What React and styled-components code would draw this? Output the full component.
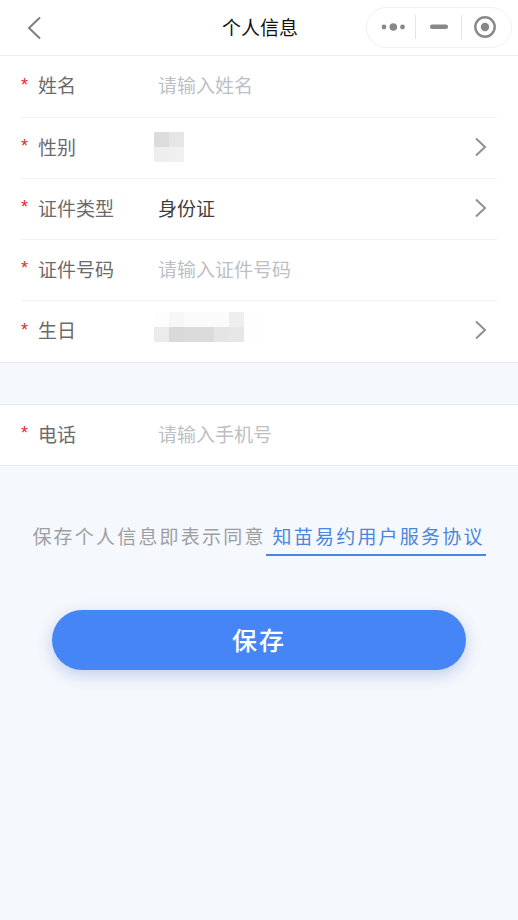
import React from "react";
import styled, { createGlobalStyle } from "styled-components";

const Global = createGlobalStyle`
  html, body { margin: 0; padding: 0; background: #f5f8fc; }
  body { font-family: "Noto Sans CJK SC", "Liberation Sans", sans-serif; }
  * { box-sizing: border-box; }
`;
const Page = styled.div`
  width: 518px; height: 920px; background: #f5f8fc; overflow: hidden;
`;
const NavBar = styled.header`
  height: 56px; background: #fff; border-bottom: 1px solid #ededed;
  display: grid; grid-template-columns: 196px auto 1fr; align-items: center;
  padding: 0 6px 0 26px;
`;
const BackButton = styled.div`display: flex; align-items: center;`;
const Title = styled.h1`
  margin: 0 0 2px; font-size: 19px; font-weight: 400; color: #111; line-height: 26px;
`;
const Capsule = styled.div`
  justify-self: end; width: 146px; height: 41px; margin-top: -1px;
  border: 1px solid #f1f1f1; border-radius: 21px; background: #fff;
  display: grid; grid-template-columns: 48px 46px 1fr; align-items: center;
`;
const CapsuleCell = styled.div`
  height: 24px; display: flex; align-items: center; justify-content: center;
  border-left: ${(p) => (p.$divider ? "1px solid #e4e4e4" : "none")};
  padding: 0 ${(p) => p.$padR || 0}px 0 ${(p) => p.$padL || 0}px;
`;
const Section = styled.section`
  background: #fff; border-bottom: 1px solid #e9ebee;
  border-top: ${(p) => (p.$top ? "1px solid #e9ebee" : "none")};
  margin-top: ${(p) => (p.$top ? "41px" : "0")};
`;
const Row = styled.div`
  height: ${(p) => p.$h || 61}px; margin: 0 21px; padding-bottom: 3px; display: flex; align-items: center;
  border-bottom: ${(p) => (p.$last ? "none" : "1px solid #eff0f2")};
`;
const Star = styled.span`
  width: 17px; color: #e8262d; font-size: 18px; line-height: 1; padding-bottom: 2px; margin-top: 1px;
  font-family: "Liberation Sans", sans-serif;
`;
const Label = styled.span`
  width: 120px; font-size: 19px; line-height: 26px; color: #6b6b6b;
`;
const Placeholder = styled.span`
  flex: 1; font-size: 19px; line-height: 26px; color: #bcbfc5;
`;
const Value = styled.span`
  flex: 1; font-size: 19px; line-height: 26px; color: #404040;
`;
const MosaicSlot = styled.div`flex: 1; margin-left: -4px;`;
const Mosaic = styled.div`
  display: grid; grid-template-columns: repeat(${(p) => p.$cols}, 15px); grid-auto-rows: 15px;
  width: max-content; margin-bottom: ${(p) => p.$lift || 0}px;
`;
const Tile = styled.i`display: block; background: ${(p) => p.$c};`;
const Chevron = styled.svg`margin-right: 10px; display: block; flex: none;`;
const Agreement = styled.div`
  margin-top: 57px; display: flex; justify-content: center; align-items: flex-start;
`;
const AgreementText = styled.span`
  font-size: 19px; line-height: 26px; letter-spacing: 2.2px; color: #9da0a3;
`;
const AgreementLink = styled.span`
  margin-left: 0; padding: 0 1px 0 7px; font-size: 19px; line-height: 26px; letter-spacing: 2.2px;
  color: #4a86e0; border-bottom: 2px solid #4a86e0; height: 33px;
`;
const SaveButton = styled.button`
  display: block; width: 414px; height: 60px; margin: 54px 0 0 52px; padding: 0 0 3px; border: 0; border-radius: 30px;
  background: #4685f5; color: #fff; font: inherit; font-size: 25px; font-weight: 500; letter-spacing: 2px;
  box-shadow: 0 5px 16px rgba(70, 110, 200, 0.3);
`;

const ChevronIcon = () => (
  <Chevron width="13" height="20" viewBox="0 0 13 20" fill="none">
    <path d="M2 1.5 L11 10 L2 18.5" stroke="#8e9094" strokeWidth="2" />
  </Chevron>
);

const gender = ["#dcdcdc", "#e6e6e6", "#eeeeee", "#f0f0f0"];
const birthday = [
  "#fdfdfd", "#f7f7f7", "#fbfbfb", "#fbfbfb", "#fbfbfb", "#eeeeee", "#fefefe",
  "#ebebeb", "#d9d9d9", "#dbdbdb", "#dbdbdb", "#e5e5e5", "#e7e7e7", "#fefefe",
];

export default function App() {
  return (
    <Page>
      <Global />
      <NavBar>
        <BackButton>
          <svg width="16" height="24" viewBox="0 0 16 24" fill="none">
            <path d="M14 1.5 L3 12 L14 22.5" stroke="#808080" strokeWidth="2" />
          </svg>
        </BackButton>
        <Title>个人信息</Title>
        <Capsule>
          <CapsuleCell $padL={4}>
            <svg width="25" height="10" viewBox="0 0 25 10">
              <circle cx="3" cy="5" r="2.4" fill="#888" />
              <circle cx="12.3" cy="5" r="3.8" fill="#888" />
              <circle cx="21.5" cy="5" r="2.4" fill="#888" />
            </svg>
          </CapsuleCell>
          <CapsuleCell $divider>
            <svg width="20" height="6" viewBox="0 0 20 6">
              <rect x="1" y="0.5" width="18" height="4.5" rx="2" fill="#888" />
            </svg>
          </CapsuleCell>
          <CapsuleCell $divider $padR={3}>
            <svg width="24" height="24" viewBox="0 0 24 24" fill="none">
              <circle cx="12" cy="12" r="9.7" stroke="#888" strokeWidth="2.4" />
              <circle cx="12" cy="12" r="4.2" fill="#888" />
            </svg>
          </CapsuleCell>
        </Capsule>
      </NavBar>

      <Section>
        <Row $h={62}><Star>*</Star><Label>姓名</Label><Placeholder>请输入姓名</Placeholder></Row>
        <Row>
          <Star>*</Star><Label>性别</Label>
          <MosaicSlot>
            <Mosaic $cols={2}>{gender.map((c, i) => <Tile key={i} $c={c} />)}</Mosaic>
          </MosaicSlot>
          <ChevronIcon />
        </Row>
        <Row><Star>*</Star><Label>证件类型</Label><Value>身份证</Value><ChevronIcon /></Row>
        <Row><Star>*</Star><Label>证件号码</Label><Placeholder>请输入证件号码</Placeholder></Row>
        <Row $last>
          <Star>*</Star><Label>生日</Label>
          <MosaicSlot>
            <Mosaic $cols={7} $lift={6}>{birthday.map((c, i) => <Tile key={i} $c={c} />)}</Mosaic>
          </MosaicSlot>
          <ChevronIcon />
        </Row>
      </Section>

      <Section $top>
        <Row $last $h={60}><Star>*</Star><Label>电话</Label><Placeholder>请输入手机号</Placeholder></Row>
      </Section>

      <Agreement>
        <AgreementText>保存个人信息即表示同意</AgreementText>
        <AgreementLink>知苗易约用户服务协议</AgreementLink>
      </Agreement>
      <SaveButton>保存</SaveButton>
    </Page>
  );
}
